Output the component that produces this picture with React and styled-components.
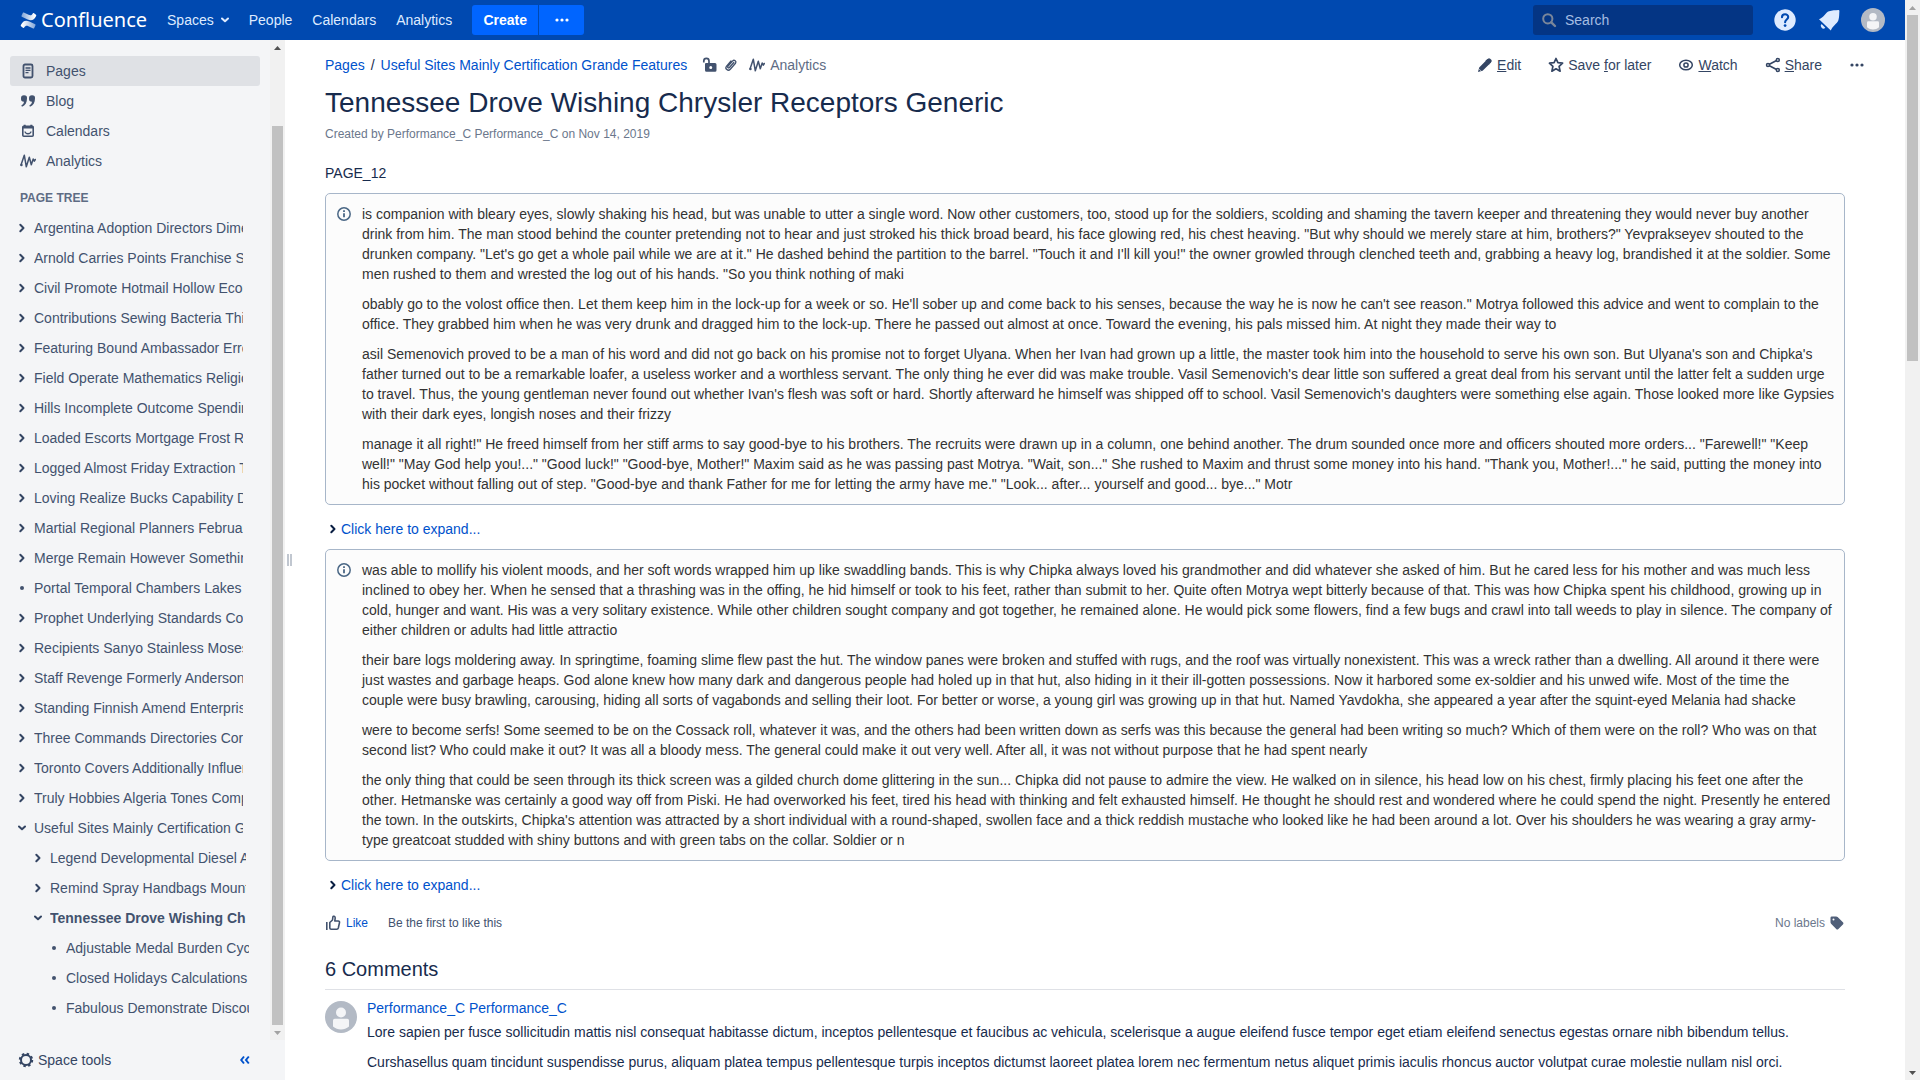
import React from 'react';
import styled, { createGlobalStyle } from 'styled-components';

const Global = createGlobalStyle`
  * { box-sizing: border-box; }
  html, body, #root { height: 100%; }
  body {
    margin: 0;
    overflow: hidden;
    background: #fff;
    color: #172b4d;
    font: 14px/20px "Liberation Sans", Arial, sans-serif;
  }
  a { color: #0052cc; text-decoration: none; }
  button, input { font: inherit; }
  svg { display: block; flex: none; }
  p { margin: 0; }
`;

const Window = styled.div`
  display: flex;
  height: 100vh;
`;

const Page = styled.div`
  flex: 1;
  min-width: 0;
  display: flex;
  flex-direction: column;
`;

/* ---------- scroll bars ---------- */

const Track = styled.div`
  flex: none;
  width: 15px;
  display: flex;
  flex-direction: column;
  align-items: center;
  background: #f1f1f1;
`;

const ScrollArrow = styled.div`
  flex: none;
  height: 15px;
  display: flex;
  align-items: center;
`;

const Rail = styled.div`
  flex: 1;
  width: 11px;
  display: flex;
  flex-direction: column;
`;

const Before = styled.div`
  flex: ${(p) => p.$share} 0 0;
`;

const Thumb = styled.div`
  flex: ${(p) => p.$share} 0 0;
  background: #c1c1c1;
`;

function ScrollBar({ before, thumb, after, up, down }) {
  return (
    <Track aria-hidden="true">
      <ScrollArrow>
        <svg width="7" height="4"><path d="M3.500 0L7 4H0z" fill={up} /></svg>
      </ScrollArrow>
      <Rail>
        <Before $share={before} />
        <Thumb $share={thumb} />
        <Before $share={after} />
      </Rail>
      <ScrollArrow>
        <svg width="7" height="4"><path d="M3.500 4L7 0H0z" fill={down} /></svg>
      </ScrollArrow>
    </Track>
  );
}

/* ---------- icons ---------- */

const Icon = ({ size = 16, children, ...rest }) => (
  <svg width={size} height={size} viewBox="0 0 16 16" fill="none" aria-hidden="true" {...rest}>
    {children}
  </svg>
);

const ChevronRight = ({ color = '#344563' }) => (
  <svg width="8" height="10" viewBox="0 0 8 10" fill="none" aria-hidden="true">
    <path d="M2.300 1.800L5.500 5L2.300 8.200" stroke={color} strokeWidth="2" strokeLinecap="round" strokeLinejoin="round" />
  </svg>
);

const ChevronDown = ({ color = '#344563' }) => (
  <svg width="8" height="8" viewBox="1 0 8 8" fill="none" aria-hidden="true">
    <path d="M2 2.500L5 5.300L8 2.500" stroke={color} strokeWidth="2" strokeLinecap="round" strokeLinejoin="round" />
  </svg>
);

const Bullet = () => (
  <svg width="4" height="4" aria-hidden="true"><circle cx="2" cy="2" r="2" fill="#42526e" /></svg>
);

const Dots = ({ color }) => (
  <Icon>
    <circle cx="3" cy="8" r="1.600" fill={color} />
    <circle cx="8" cy="8" r="1.600" fill={color} />
    <circle cx="13" cy="8" r="1.600" fill={color} />
  </Icon>
);

const PagesIcon = () => (
  <Icon>
    <rect x="3.500" y="1.500" width="9" height="13" rx="1.500" stroke="#42526e" strokeWidth="1.800" />
    <path d="M5.500 5h5M5.500 7.300h5M5.500 9.600h3" stroke="#42526e" strokeWidth="1.300" />
  </Icon>
);

const BlogIcon = () => (
  <Icon>
    <path d="M4 2.200a3 3 0 0 1 3 3.300C7 9.500 5.300 12.500 2 13.800l-.7-1.200c1.500-.9 2.500-2.200 2.700-3.800A3.200 3.200 0 0 1 1 5.400 3.100 3.100 0 0 1 4 2.200zM12 2.200a3 3 0 0 1 3 3.300c0 4-1.700 7-5 8.300l-.7-1.200c1.500-.9 2.500-2.200 2.700-3.800a3.200 3.200 0 0 1-3-3.400 3.100 3.100 0 0 1 3-3.200z" fill="#42526e" />
  </Icon>
);

const CalendarIcon = () => (
  <Icon>
    <rect x="2.800" y="3.300" width="10.400" height="10" rx="1" stroke="#42526e" strokeWidth="1.600" />
    <path d="M2.500 4.500h11M4.700 1.800v2M11.300 1.800v2" stroke="#42526e" strokeWidth="2" />
    <path d="M5 8.500c.4 3 5.600 3 6 0" stroke="#42526e" strokeWidth="1.300" />
  </Icon>
);

const AnalyticsIcon = () => (
  <Icon>
    <path d="M1 12L4.300 2.200L6.300 13.800L9.300 4.200L11.300 11.800L13.200 6L14.300 8.200L15.300 6.500" stroke="#42526e" strokeWidth="1.500" strokeLinecap="round" strokeLinejoin="round" />
    <circle cx="1.500" cy="12" r="1.200" fill="#42526e" />
  </Icon>
);

const GearIcon = () => (
  <Icon>
    <circle cx="8" cy="8" r="5" stroke="#344563" strokeWidth="2" />
    <circle cx="8" cy="8" r="6.200" stroke="#344563" strokeWidth="2" strokeDasharray="2.430 2.430" />
  </Icon>
);

const LockIcon = () => (
  <Icon>
    <path d="M1.800 5.500V4a2.600 2.600 0 0 1 5.200 0v3" stroke="#42526e" strokeWidth="1.700" />
    <path fillRule="evenodd" d="M4 6h9a1.500 1.500 0 0 1 1.500 1.500v5.700a1.500 1.500 0 0 1-1.500 1.500H4.500A1.500 1.500 0 0 1 3 13.200V7a1 1 0 0 1 1-1zM8.750 9a1.500 1.500 0 1 0 0 3 1.500 1.500 0 0 0 0-3z" fill="#42526e" />
  </Icon>
);

const ClipIcon = () => (
  <Icon>
    <path d="M10.800 5.500l-4.600 5.200c-.7.800-2.100-.3-1.300-1.300l4.800-5.500c1.500-1.600 4.200.5 2.800 2.400l-5.200 6c-2.300 2.400-5.700-.6-3.900-3L8 4" stroke="#42526e" strokeWidth="1.300" strokeLinecap="round" />
  </Icon>
);

const PencilIcon = () => (
  <Icon>
    <path d="M1 15l1.200-4.600 6.900-6.900 3.400 3.400-6.900 6.900zM9.900 2.700l1-1a1.700 1.700 0 0 1 2.300 0l1.100 1.100a1.700 1.700 0 0 1 0 2.300l-1 1z" fill="#344563" />
    <path d="M8.500 3.500L10.500 2L14 5.500L12 7.500z" fill="#344563" />
    <path d="M1.800 11.700l2.500 2.500" stroke="#fff" strokeWidth=".6" />
  </Icon>
);

const StarIcon = () => (
  <Icon>
    <path d="M8 1.500l1.900 4.200 4.700.5-3.500 3.200 1 4.800L8 11.800l-4.100 2.400 1-4.800L1.400 6.200l4.700-.5z" stroke="#344563" strokeWidth="1.700" strokeLinejoin="round" />
  </Icon>
);

const EyeIcon = () => (
  <Icon>
    <ellipse cx="8" cy="8" rx="6.300" ry="4.800" stroke="#344563" strokeWidth="1.500" />
    <circle cx="8" cy="8" r="2.100" stroke="#344563" strokeWidth="1.500" />
  </Icon>
);

const ShareIcon = () => (
  <Icon>
    <path d="M3 8L12.500 3M3 8l9.500 5" stroke="#344563" strokeWidth="1.500" />
    <g fill="#fff" stroke="#344563" strokeWidth="1.500">
      <circle cx="3" cy="8" r="1.500" />
      <circle cx="12.800" cy="3" r="1.500" />
      <circle cx="12.800" cy="13" r="1.500" />
    </g>
  </Icon>
);

const InfoIcon = () => (
  <Icon>
    <circle cx="8" cy="8" r="6.200" stroke="#4a6785" strokeWidth="1.500" />
    <path d="M8 7.200v4.100M8 4.300v1.800" stroke="#4a6785" strokeWidth="1.800" />
  </Icon>
);

const LikeIcon = () => (
  <Icon>
    <path d="M1.800 7v8" stroke="#42526e" strokeWidth="1.600" />
    <path d="M4.800 7.500L7.500 5l.4-3.200c.2-1 2.400-.8 2.300 1.200L9.800 6h3.400c1 0 1.500.8 1.300 1.600l-1.200 5.400c-.2.800-.7 1.200-1.500 1.200H6.200c-.8 0-1.400-.5-1.400-1.200z" stroke="#42526e" strokeWidth="1.600" strokeLinejoin="round" />
  </Icon>
);

const TagIcon = () => (
  <Icon>
    <path fillRule="evenodd" d="M1.500 2.800A1.300 1.300 0 0 1 2.800 1.500h4.400c.5 0 1 .2 1.400.6l5.300 5.200c.7.700.7 1.500 0 2.200l-4.500 4.400c-.7.700-1.500.7-2.200 0L2.100 8.700c-.4-.4-.6-.9-.6-1.400zM4.500 3.500a1 1 0 1 0 0 2 1 1 0 0 0 0-2z" fill="#505f79" />
  </Icon>
);

const SearchIcon = () => (
  <Icon>
    <circle cx="6.800" cy="6.800" r="4.600" stroke="#7a869a" strokeWidth="2" />
    <path d="M10.300 10.300L14 14" stroke="#7a869a" strokeWidth="2.400" strokeLinecap="round" />
  </Icon>
);

const HelpIcon = () => (
  <svg width="24" height="24" viewBox="0 0 24 24" fill="none" aria-hidden="true">
    <circle cx="12" cy="12" r="10.700" fill="#deebff" />
    <path d="M9 9.300c0-4 6.200-3.900 6.200-.3 0 2.400-3.100 2.500-3.100 5.200" stroke="#0049b0" strokeWidth="2.100" strokeLinecap="round" />
    <circle cx="12.100" cy="17.600" r="1.400" fill="#0049b0" />
  </svg>
);

const BellIcon = () => (
  <svg width="24" height="24" viewBox="0 0 24 24" aria-hidden="true">
    <path d="M2 11.200C6.500 9.800 8.500 4.300 12 3.200c3-.9 6.500-.9 9.500-1.200.6 0 .9.300.9.900-.2 3-.1 6.500-1 9.300-1.200 3.500-6 5.800-7.600 10.300z" fill="#deebff" />
    <path d="M4.600 16l3.700 3.700a2.600 2.600 0 1 1-3.700-3.700z" fill="#deebff" />
  </svg>
);

const Person = ({ size }) => (
  <svg width={size} height={size} viewBox="0 0 32 32" aria-hidden="true">
    <circle cx="16" cy="16" r="16" fill="#b3bac5" />
    <circle cx="16" cy="11.500" r="5" fill="#f4f5f7" />
    <path d="M8 19.500a1.700 1.700 0 0 1 1.700-1.700h12.600a1.700 1.700 0 0 1 1.700 1.700v6c-4.600 4-11.400 4-16 0z" fill="#f4f5f7" />
  </svg>
);

const LogoMark = () => (
  <svg width="17" height="17" viewBox="0 0 17 17" aria-hidden="true">
    <defs>
      <linearGradient id="swooshTop" x1="1" y1="0" x2="0" y2="0">
        <stop offset="0.100" stopColor="#fff" /><stop offset="1" stopColor="#fff" stopOpacity=".5" />
      </linearGradient>
      <linearGradient id="swooshBottom" x1="0" y1="0" x2="1" y2="0">
        <stop offset="0.100" stopColor="#fff" /><stop offset="1" stopColor="#fff" stopOpacity=".5" />
      </linearGradient>
    </defs>
    <path d="M1 12.800c1.800-3.300 4.200-5.200 8.400-3.200l5.800 2.700c.4.200.5.500.3.900l-1.400 3c-.2.400-.5.500-.9.300L8.400 14.200c-2-1-3-.4-4.200 1.400-.2.400-.5.500-.9.300L1 14.200c-.4-.3-.4-.8 0-1.400z" fill="url(#swooshBottom)" />
    <path d="M16 4.200c-1.800 3.300-4.200 5.200-8.400 3.200L1.800 4.700c-.4-.2-.5-.5-.3-.9l1.400-3c.2-.4.500-.5.900-.3l4.800 2.300c2 1 3 .4 4.200-1.400.2-.4.500-.5.900-.3L16 2.800c.4.300.4.800 0 1.400z" fill="url(#swooshTop)" />
  </svg>
);

/* ---------- top bar ---------- */

const TopBar = styled.header`
  flex: none;
  height: 40px;
  display: flex;
  align-items: center;
  justify-content: space-between;
  padding: 0 20px;
  background: #0049b0;
  color: #deebff;
`;

const Group = styled.div`
  display: flex;
  align-items: center;
  gap: ${(p) => p.$gap || 0}px;
`;

const Brand = styled.a`
  display: flex;
  align-items: center;
  gap: 4px;
  margin-right: 20px;
  color: #fff;
  font: 20px/24px "Noto Sans", "Open Sans", sans-serif;
`;

const Nav = styled.nav`
  display: flex;
  gap: 20px;
  margin-right: 20px;
`;

const NavLink = styled.a`
  display: flex;
  align-items: center;
  gap: 7px;
  color: #deebff;
`;

const Primary = styled.button`
  height: 30px;
  min-width: ${(p) => p.$width}px;
  display: flex;
  align-items: center;
  justify-content: center;
  padding: 0;
  border: 0;
  border-radius: ${(p) => p.$radius};
  background: #0065ff;
  color: #fff;
  font-weight: 700;
`;

const SearchBox = styled.label`
  width: 220px;
  height: 30px;
  display: flex;
  align-items: center;
  gap: 8px;
  padding: 0 8px;
  border-radius: 3px;
  background: #043584;
`;

const SearchInput = styled.input`
  flex: 1;
  min-width: 0;
  padding: 0;
  border: 0;
  outline: 0;
  background: transparent;
  color: #deebff;
  &::placeholder { color: #a5bde2; opacity: 1; }
`;

const Plain = styled.button`
  display: flex;
  align-items: center;
  gap: ${(p) => p.$gap || 0}px;
  padding: 0;
  border: 0;
  background: none;
  color: ${(p) => p.$color || '#344563'};
  font-size: ${(p) => p.$size || 14}px;
  line-height: 20px;
`;

/* ---------- side bar ---------- */

const Body = styled.div`
  flex: 1;
  min-height: 0;
  display: flex;
`;

const Side = styled.aside`
  flex: none;
  width: 285px;
  display: flex;
  flex-direction: column;
  background: #f4f5f7;
  color: #42526e;
`;

const SideScroll = styled.div`
  flex: 1;
  min-height: 0;
  display: flex;
`;

const SideContent = styled.div`
  flex: 1;
  min-width: 0;
  overflow: hidden;
  padding: 16px 10px 0;
`;

const SideLink = styled.a`
  height: 30px;
  display: flex;
  align-items: center;
  gap: 10px;
  padding: 0 10px;
  border-radius: 3px;
  background: ${(p) => (p.$active ? '#dfe1e5' : 'transparent')};
  color: #42526e;
`;

const TreeTitle = styled.h2`
  margin: 12px 0 5px;
  padding-left: 10px;
  color: #5e6c84;
  font-size: 12px;
  line-height: 20px;
`;

const Tree = styled.ul`
  list-style: none;
  margin: 0;
  padding: 0 ${(p) => (p.$nested ? 0 : 17)}px 0 ${(p) => (p.$nested ? 16 : 4)}px;
  ${(p) => p.$nested && 'margin-right: -3px;'}
`;

const TreeRow = styled.div`
  height: 30px;
  display: flex;
  align-items: center;
  gap: 4px;
`;

const Toggle = styled.span`
  flex: none;
  width: 16px;
  display: flex;
  justify-content: center;
`;

const TreeLink = styled.a`
  flex: 1;
  min-width: 0;
  overflow: hidden;
  white-space: nowrap;
  color: #42526e;
  font-weight: ${(p) => (p.$current ? 700 : 400)};
`;

const SideFooter = styled.div`
  flex: none;
  height: 40px;
  display: flex;
  align-items: center;
  justify-content: space-between;
  padding: 0 35px 0 18px;
`;

const Splitter = styled.div`
  flex: none;
  width: 9px;
  display: flex;
  align-items: center;
  justify-content: center;
  gap: 1px;
`;

const Grip = styled.span`
  width: 2px;
  height: 12px;
  background: #c1c7d0;
`;

/* ---------- article ---------- */

const Main = styled.main`
  flex: 1;
  min-width: 0;
  overflow: hidden;
  padding: 15px 60px 0 31px;
`;

const Spread = styled.div`
  display: flex;
  align-items: center;
  justify-content: space-between;
`;

const Crumbs = styled.nav`
  display: flex;
  align-items: center;
  gap: 6px;
`;

const Meta = styled.div`
  display: flex;
  align-items: center;
  gap: 5px;
  margin-left: 9px;
`;

const MetaLink = styled.a`
  display: flex;
  gap: 5px;
  align-items: center;
  margin-left: 5px;
  color: #5e6c84;
`;

const Actions = styled(Group)`
  margin-right: -20px;
`;

const Title = styled.h1`
  margin: 12px 0 5px;
  font-size: 28px;
  font-weight: 400;
  line-height: 32px;
`;

const Byline = styled.p`
  margin-bottom: 19px;
  color: #6b778c;
  font-size: 12px;
`;

const Panel = styled.section`
  display: flex;
  align-items: flex-start;
  gap: 10px;
  margin-top: 10px;
  padding: 10px;
  border: 1px solid #a7b6c9;
  border-radius: 5px;
  background: #fcfcfc;
  color: #333;
`;

const PanelIcon = styled.div`
  padding-top: 2px;
`;

const PanelText = styled.div`
  display: flex;
  flex-direction: column;
  gap: 10px;
`;

const Expander = styled.div`
  display: flex;
  margin-top: 14px;
  padding-left: 4px;
`;

const Social = styled(Spread)`
  margin-top: 18px;
  font-size: 12px;
`;

const CommentsTitle = styled.h2`
  margin: 24px 0 8px;
  padding-bottom: 8px;
  border-bottom: 1px solid #dfe1e6;
  font-size: 20px;
  font-weight: 400;
  line-height: 24px;
`;

const Comment = styled.article`
  display: flex;
  align-items: flex-start;
  gap: 10px;
`;

const CommentAvatar = styled.div`
  padding-top: 3px;
`;

const CommentText = styled.div`
  display: flex;
  flex-direction: column;
  gap: ${(p) => p.$gap}px;
`;

const Muted = styled.span`
  color: ${(p) => p.$color};
`;

/* ---------- data ---------- */

const tree = [
  'Argentina Adoption Directors Dimension',
  'Arnold Carries Points Franchise Spend',
  'Civil Promote Hotmail Hollow Economy',
  'Contributions Sewing Bacteria Things',
  'Featuring Bound Ambassador Errors',
  'Field Operate Mathematics Religion',
  'Hills Incomplete Outcome Spending',
  'Loaded Escorts Mortgage Frost Rates',
  'Logged Almost Friday Extraction Tools',
  'Loving Realize Bucks Capability Data',
  'Martial Regional Planners February',
  'Merge Remain However Something',
  'Portal Temporal Chambers Lakes',
  'Prophet Underlying Standards Court',
  'Recipients Sanyo Stainless Moses',
  'Staff Revenge Formerly Anderson',
  'Standing Finnish Amend Enterprise',
  'Three Commands Directories Corner',
  'Toronto Covers Additionally Influence',
  'Truly Hobbies Algeria Tones Compare',
].map((title) => ({ title, kind: title.startsWith('Portal') ? 'leaf' : 'closed' }));

tree.push({
  title: 'Useful Sites Mainly Certification Grande',
  kind: 'open',
  children: [
    { title: 'Legend Developmental Diesel Arts', kind: 'closed' },
    { title: 'Remind Spray Handbags Mount', kind: 'closed' },
    {
      title: 'Tennessee Drove Wishing Chrysler',
      kind: 'open',
      current: true,
      children: [
        { title: 'Adjustable Medal Burden Cycle', kind: 'leaf' },
        { title: 'Closed Holidays Calculations', kind: 'leaf' },
        { title: 'Fabulous Demonstrate Discount', kind: 'leaf' },
      ],
    },
  ],
});

const firstPanel = [
  `is companion with bleary eyes, slowly shaking his head, but was unable to utter a single word. Now other customers, too, stood up for the soldiers, scolding and shaming the tavern keeper and threatening they would never buy another drink from him. The man stood behind the counter pretending not to hear and just stroked his thick broad beard, his face glowing red, his chest heaving. "But why should we merely stare at him, brothers?" Yevprakseyev shouted to the drunken company. "Let's go get a whole pail while we are at it." He dashed behind the partition to the barrel. "Touch it and I'll kill you!" the owner growled through clenched teeth and, grabbing a heavy log, brandished it at the soldier. Some men rushed to them and wrested the log out of his hands. "So you think nothing of maki`,
  `obably go to the volost office then. Let them keep him in the lock-up for a week or so. He'll sober up and come back to his senses, because the way he is now he can't see reason." Motrya followed this advice and went to complain to the office. They grabbed him when he was very drunk and dragged him to the lock-up. There he passed out almost at once. Toward the evening, his pals missed him. At night they made their way to`,
  `asil Semenovich proved to be a man of his word and did not go back on his promise not to forget Ulyana. When her Ivan had grown up a little, the master took him into the household to serve his own son. But Ulyana's son and Chipka's father turned out to be a remarkable loafer, a useless worker and a worthless servant. The only thing he ever did was make trouble. Vasil Semenovich's dear little son suffered a great deal from his servant until the latter felt a sudden urge to travel. Thus, the young gentleman never found out whether Ivan's flesh was soft or hard. Shortly afterward he himself was shipped off to school. Vasil Semenovich's daughters were something else again. Those looked more like Gypsies with their dark eyes, longish noses and their frizzy`,
  `manage it all right!" He freed himself from her stiff arms to say good-bye to his brothers. The recruits were drawn up in a column, one behind another. The drum sounded once more and officers shouted more orders... "Farewell!" "Keep well!" "May God help you!..." "Good luck!" "Good-bye, Mother!" Maxim said as he was passing past Motrya. "Wait, son..." She rushed to Maxim and thrust some money into his hand. "Thank you, Mother!..." he said, putting the money into his pocket without falling out of step. "Good-bye and thank Father for me for letting the army have me." "Look... after... yourself and good... bye..." Motr`,
];

const secondPanel = [
  `was able to mollify his violent moods, and her soft words wrapped him up like swaddling bands. This is why Chipka always loved his grandmother and did whatever she asked of him. But he cared less for his mother and was much less inclined to obey her. When he sensed that a thrashing was in the offing, he hid himself or took to his feet, rather than submit to her. Quite often Motrya wept bitterly because of that. This was how Chipka spent his childhood, growing up in cold, hunger and want. His was a very solitary existence. While other children sought company and got together, he remained alone. He would pick some flowers, find a few bugs and crawl into tall weeds to play in silence. The company of either children or adults had little attractio`,
  `their bare logs moldering away. In springtime, foaming slime flew past the hut. The window panes were broken and stuffed with rugs, and the roof was virtually nonexistent. This was a wreck rather than a dwelling. All around it there were just wastes and garbage heaps. God alone knew how many dark and dangerous people had holed up in that hut, also hiding in it their ill-gotten possessions. Now it harbored some ex-soldier and his unwed wife. Most of the time the couple were busy brawling, carousing, hiding all sorts of vagabonds and selling their loot. For better or worse, a young girl was growing up in that hut. Named Yavdokha, she appeared a year after the squint-eyed Melania had shacke`,
  `were to become serfs! Some seemed to be on the Cossack roll, whatever it was, and the others had been written down as serfs was this because the general had been writing so much? Which of them were on the roll? Who was on that second list? Who could make it out? It was all a bloody mess. The general could make it out very well. After all, it was not without purpose that he had spent nearly`,
  `the only thing that could be seen through its thick screen was a gilded church dome glittering in the sun... Chipka did not pause to admire the view. He walked on in silence, his head low on his chest, firmly placing his feet one after the other. Hetmanske was certainly a good way off from Piski. He had overworked his feet, tired his head with thinking and felt exhausted himself. He thought he should rest and wondered where he could spend the night. Presently he entered the town. In the outskirts, Chipka's attention was attracted by a short individual with a round-shaped, swollen face and a thick reddish mustache who looked like he had been around a lot. Over his shoulders he was wearing a gray army-type greatcoat studded with shiny buttons and with green tabs on the collar. Soldier or n`,
];

/* ---------- parts ---------- */

const markers = { open: <ChevronDown />, closed: <ChevronRight />, leaf: <Bullet /> };

function PageTree({ nodes, nested }) {
  return (
    <Tree $nested={nested}>
      {nodes.map((node) => (
        <li key={node.title}>
          <TreeRow>
            <Toggle>{markers[node.kind]}</Toggle>
            <TreeLink href="#" $current={node.current}>{node.title}</TreeLink>
          </TreeRow>
          {node.children && <PageTree nodes={node.children} nested />}
        </li>
      ))}
    </Tree>
  );
}

function InfoPanel({ paragraphs }) {
  return (
    <Panel>
      <PanelIcon><InfoIcon /></PanelIcon>
      <PanelText>
        {paragraphs.map((text) => <p key={text}>{text}</p>)}
      </PanelText>
    </Panel>
  );
}

function ExpandLink() {
  return (
    <Expander>
      <Plain $gap={4} $color="#0052cc">
        <ChevronRight color="#091e42" />
        Click here to expand...
      </Plain>
    </Expander>
  );
}

export default function App() {
  return (
    <Window>
      <Global />
      <Page>
        <TopBar>
          <Group>
            <Brand href="#"><LogoMark />Confluence</Brand>
            <Nav aria-label="Site">
              <NavLink href="#">Spaces <ChevronDown color="#deebff" /></NavLink>
              <NavLink href="#">People</NavLink>
              <NavLink href="#">Calendars</NavLink>
              <NavLink href="#">Analytics</NavLink>
            </Nav>
            <Group $gap={1}>
              <Primary $width={66} $radius="3px 0 0 3px">Create</Primary>
              <Primary $width={45} $radius="0 3px 3px 0" aria-label="Create from template"><Dots color="#fff" /></Primary>
            </Group>
          </Group>
          <Group $gap={20}>
            <SearchBox>
              <SearchIcon />
              <SearchInput type="text" placeholder="Search" aria-label="Search" />
            </SearchBox>
            <Plain aria-label="Help"><HelpIcon /></Plain>
            <Plain aria-label="Notifications"><BellIcon /></Plain>
            <Plain aria-label="Profile"><Person size={24} /></Plain>
          </Group>
        </TopBar>
        <Body>
          <Side>
            <SideScroll>
              <SideContent>
                <nav aria-label="Space">
                  <SideLink href="#" $active><PagesIcon />Pages</SideLink>
                  <SideLink href="#"><BlogIcon />Blog</SideLink>
                  <SideLink href="#"><CalendarIcon />Calendars</SideLink>
                  <SideLink href="#"><AnalyticsIcon />Analytics</SideLink>
                </nav>
                <TreeTitle>PAGE TREE</TreeTitle>
                <PageTree nodes={tree} />
              </SideContent>
              <ScrollBar before={71} thumb={899} after={0} up="#505050" down="#a3a3a3" />
            </SideScroll>
            <SideFooter>
              <Plain $gap={4}><GearIcon />Space tools</Plain>
              <Plain aria-label="Collapse sidebar">
                <svg width="10" height="10" viewBox="0 0 10 10" fill="none" aria-hidden="true">
                  <path d="M4 1.500L1.200 5L4 8.500M8.800 1.500L6 5l2.800 3.500" stroke="#0052cc" strokeWidth="2" />
                </svg>
              </Plain>
            </SideFooter>
          </Side>
          <Splitter><Grip /><Grip /></Splitter>
          <Main>
            <Spread>
              <Crumbs aria-label="Breadcrumb">
                <a href="#">Pages</a>
                <span>/</span>
                <a href="#">Useful Sites Mainly Certification Grande Features</a>
                <Meta>
                  <LockIcon />
                  <ClipIcon />
                  <MetaLink href="#"><AnalyticsIcon />Analytics</MetaLink>
                </Meta>
              </Crumbs>
              <Actions $gap={27}>
                <Plain $gap={4}><PencilIcon /><span><u>E</u>dit</span></Plain>
                <Plain $gap={4}><StarIcon /><span>Save <u>f</u>or later</span></Plain>
                <Plain $gap={4}><EyeIcon /><span><u>W</u>atch</span></Plain>
                <Plain $gap={4}><ShareIcon /><span><u>S</u>hare</span></Plain>
                <Plain aria-label="More actions"><Dots color="#344563" /></Plain>
              </Actions>
            </Spread>
            <Title>Tennessee Drove Wishing Chrysler Receptors Generic</Title>
            <Byline>Created by Performance_C Performance_C on Nov 14, 2019</Byline>
            <p>PAGE_12</p>
            <InfoPanel paragraphs={firstPanel} />
            <ExpandLink />
            <InfoPanel paragraphs={secondPanel} />
            <ExpandLink />
            <Social>
              <Group $gap={20}>
                <Plain $gap={5} $color="#0052cc" $size={12}><LikeIcon />Like</Plain>
                <Muted $color="#42526e">Be the first to like this</Muted>
              </Group>
              <Group $gap={4}>
                <Muted $color="#6b778c">No labels</Muted>
                <TagIcon />
              </Group>
            </Social>
            <CommentsTitle>6 Comments</CommentsTitle>
            <Comment>
              <CommentAvatar><Person size={32} /></CommentAvatar>
              <CommentText $gap={4}>
                <a href="#">Performance_C Performance_C</a>
                <CommentText $gap={10}>
                  <p>Lore sapien per fusce sollicitudin mattis nisl consequat habitasse dictum, inceptos pellentesque et faucibus ac vehicula, scelerisque a augue eleifend fusce tempor eget etiam eleifend senectus egestas ornare nibh bibendum tellus.</p>
                  <p>Curshasellus quam tincidunt suspendisse purus, aliquam platea tempus pellentesque turpis inceptos dictumst laoreet platea lorem nec fermentum netus aliquet primis iaculis rhoncus auctor volutpat curae molestie nullam nisl orci.</p>
                </CommentText>
              </CommentText>
            </Comment>
          </Main>
        </Body>
      </Page>
      <ScrollBar before={0} thumb={346} after={704} up="#a3a3a3" down="#505050" />
    </Window>
  );
}
